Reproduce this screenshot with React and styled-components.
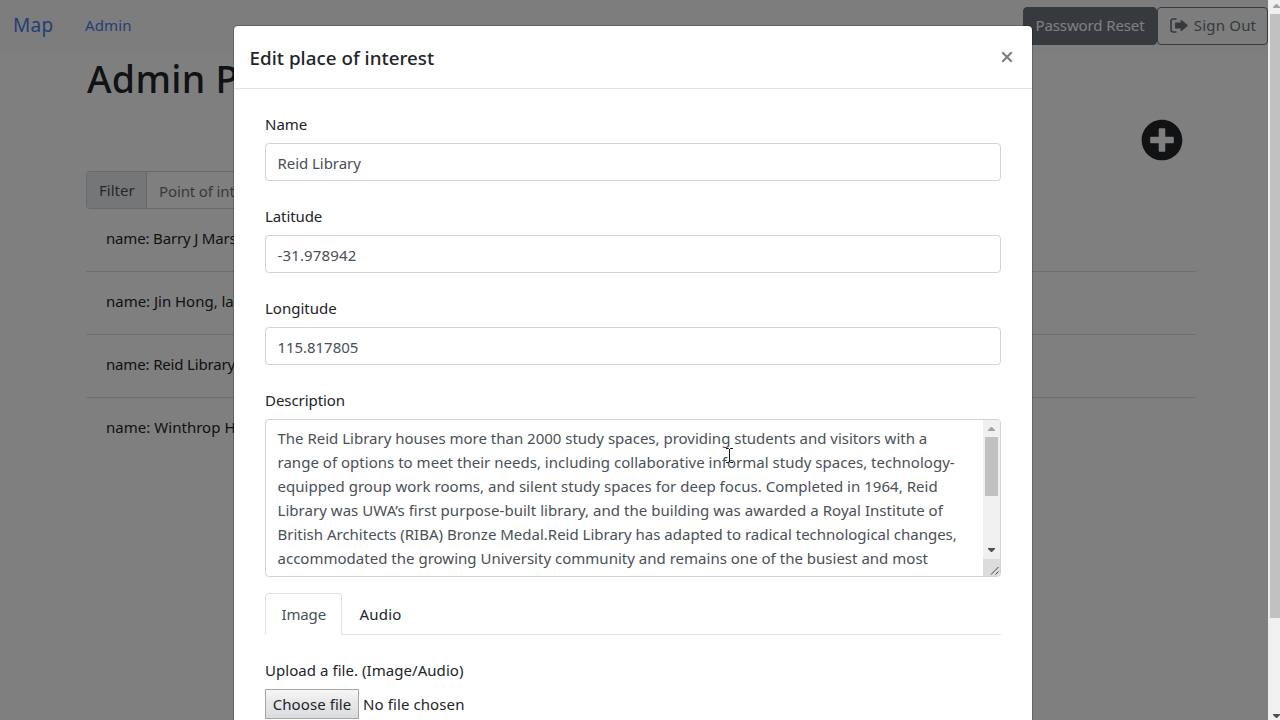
import React from "react";
import styled, { createGlobalStyle } from "styled-components";
import { FaPlusCircle } from "react-icons/fa";

const GlobalStyle = createGlobalStyle`
  *, *::before, *::after { box-sizing: border-box; }
  html, body { margin: 0; padding: 0; height: 720px; overflow: hidden; }
  body {
    font-family: "Noto Sans", "Open Sans", sans-serif;
    font-size: 15px;
    line-height: 24px;
    color: #212529;
    background: #fff;
  }
  button, input { font: inherit; }
`;

const Shell = styled.div`
  position: relative;
  display: flex;
  width: 1280px;
  height: 720px;
  overflow: hidden;
`;

const Page = styled.div`
  flex: 0 0 1268px;
  overflow: hidden;
`;

const Tracked = styled.span`
  white-space: pre;
  letter-spacing: ${(p) => p.$ls || 0}px;
`;

/* Navigation bar */
const Navbar = styled.nav`
  display: flex;
  align-items: center;
  height: 53px;
  padding: 0 0 2px 13px;
  background: #f8fbf9;
`;

const Brand = styled.a`
  width: 72px;
  padding-bottom: 1px;
  font-size: 19px;
  letter-spacing: 0.3px;
  color: #4a7cf0;
`;

const NavLink = styled.a`
  flex: 1;
  padding-bottom: 2px;
  letter-spacing: 0.14px;
  color: #4a7cf0;
`;

const NavButton = styled.button`
  display: flex;
  align-items: center;
  justify-content: center;
  width: ${(p) => p.$width}px;
  height: 38px;
  padding: 0 0 2px;
  border: 1px solid #6c757d;
  border-radius: 4px;
  background: ${(p) => (p.$solid ? "#6c757d" : "transparent")};
  color: ${(p) => (p.$solid ? "#fff" : "#6c757d")};
  white-space: pre;
  letter-spacing: ${(p) => p.$ls || 0}px;
`;

const SignOutIcon = styled.svg`
  width: 18px;
  height: 15px;
  margin: 2px 6px 0 1px;
`;

/* Admin content */
const Content = styled.main`
  width: 1110px;
  margin-left: 86px;
`;

const Heading = styled.h1`
  margin: 0;
  padding: 2px 0 1px 1px;
  white-space: nowrap;
  font-size: 37.5px;
  line-height: 48px;
  font-weight: 500;
  letter-spacing: 0.3px;
`;

const AddRow = styled.div`
  display: flex;
  justify-content: flex-end;
  height: 67px;
  padding: 15px 13px 0 0;
  svg { width: 42px; height: 42px; }
`;

const FilterGroup = styled.div`
  display: flex;
  width: 600px;
  height: 38px;
  border: 1px solid #ced4da;
  border-radius: 4px;
  overflow: hidden;
`;

const FilterLabel = styled.div`
  width: 60px;
  padding: 6px 12px;
  border-right: 1px solid #ced4da;
  background: #e9ecef;
  color: #495057;
`;

const FilterInput = styled.div`
  padding: 7px 0 7px 12px;
  white-space: nowrap;
  letter-spacing: -0.13px;
  color: #6c757d;
`;

const List = styled.ul`
  margin: 0;
  padding: 0;
  list-style: none;
`;

const ListItem = styled.li`
  height: 63px;
  padding: 17px 20px 0;
  border-bottom: 1px solid ${(p) => (p.$last ? "transparent" : "#dfdfdf")};
  white-space: nowrap;
  letter-spacing: ${(p) => p.$ls || 0}px;
`;

/* Scroll bars */
const PageScroll = styled.div`
  display: flex;
  flex-direction: column;
  flex: 0 0 12px;
  padding-left: 2px;
  background: #f0f0f0;
`;

const Arrow = styled.svg`
  display: block;
  flex: none;
  width: 7px;
  height: 4px;
  margin: ${(p) => p.$margin};
  fill: ${(p) => p.$color};
`;

const Thumb = styled.div`
  height: ${(p) => p.$height}px;
  background: #c1c1c1;
`;

const Spacer = styled.div`
  flex: 1;
`;

/* Modal */
const Backdrop = styled.div`
  position: absolute;
  inset: 0 12px 0 0;
  background: rgba(0, 0, 0, 0.5);
`;

const Modal = styled.section`
  position: absolute;
  top: 25px;
  left: 233px;
  width: 800px;
  height: 760px;
  border: 1px solid rgba(0, 0, 0, 0.2);
  border-radius: 5px;
  background: #fff;
  background-clip: padding-box;
`;

const ModalHeader = styled.header`
  display: flex;
  align-items: center;
  justify-content: space-between;
  height: 63px;
  padding: 0 19px 0 15.5px;
  border-bottom: 1px solid #dee2e6;
`;

const ModalTitle = styled.h5`
  margin: 0;
  padding-top: 2px;
  font-size: 18.75px;
  font-weight: 550;
  letter-spacing: 0.04px;
`;

const CloseIcon = styled.svg`
  width: 12px;
  height: 12px;
  stroke: #7f7f7f;
  stroke-width: 2.2;
`;

const ModalBody = styled.div`
  padding: 22px 31px 0;
`;

const Field = styled.div`
  margin-bottom: ${(p) => p.$gap ?? 22}px;
`;

const Label = styled.label`
  display: block;
  height: 24px;
  padding-top: ${(p) => p.$drop ?? 1}px;
  margin-bottom: ${(p) => p.$gap ?? 8}px;
  letter-spacing: ${(p) => p.$ls || 0}px;
`;

const Input = styled.div`
  height: 38px;
  padding: 7px 11.5px;
  border: 1px solid #ced4da;
  border-radius: 4px;
  color: #495057;
  letter-spacing: ${(p) => p.$ls || 0}px;
`;

const TextArea = styled.div`
  display: flex;
  height: 158px;
  border: 1px solid #ced4da;
  border-radius: 4px;
  overflow: hidden;
  color: #495057;
`;

const TextLines = styled.div`
  display: flex;
  flex-direction: column;
  flex: 1;
  padding: 6px 0 0 11.5px;
`;

const AreaScroll = styled.div`
  display: flex;
  flex-direction: column;
  flex: 0 0 17px;
  background: #f0f0f0;
`;

const AreaThumb = styled(Thumb)`
  margin: 0 2px;
`;

const Grip = styled.svg`
  display: block;
  width: 17px;
  height: 17px;
  background: #dcdcdc;
  stroke: #454545;
`;

const Tabs = styled.div`
  display: flex;
  height: 42px;
  margin-bottom: 23px;
  border-bottom: 1px solid #dee2e6;
`;

const Tab = styled.div`
  width: 77px;
  height: 42px;
  padding: 8px 0 0 ${(p) => (p.$active ? 15.5 : 16.5)}px;
  border: 1px solid transparent;
  border-color: ${(p) => (p.$active ? "#dee2e6 #dee2e6 #fff" : "transparent")};
  border-radius: 4px 4px 0 0;
  color: ${(p) => (p.$active ? "#495057" : "#212529")};
  letter-spacing: ${(p) => p.$ls}px;
  white-space: nowrap;
`;

const FileRow = styled.div`
  display: flex;
  align-items: center;
  gap: 4px;
  letter-spacing: 0.1px;
`;

const FileButton = styled.button`
  width: 94px;
  height: 30px;
  padding: 0;
  border: 1px solid #a6a6a6;
  background: linear-gradient(#f6f7f4, #e9e9ea 40%, #d9dbde);
  color: #212529;
  letter-spacing: 0.08px;
  white-space: nowrap;
`;

const TextCursor = styled.svg`
  position: absolute;
  left: 725px;
  top: 448px;
  width: 8px;
  height: 15px;
  stroke: #111;
  fill: none;
`;

const places = [
  { text: "name: Barry J Mars", ls: -0.17 },
  { text: "name: Jin Hong, la", ls: -0.02 },
  { text: "name: Reid Library", ls: -0.16 },
  { text: "name: Winthrop H", ls: 0.03 },
];

const fields = [
  { label: "Name", labelLs: 0, value: "Reid Library", ls: -0.05 },
  { label: "Latitude", labelLs: -0.1, value: "-31.978942", ls: 0.14 },
  { label: "Longitude", labelLs: 0, value: "115.817805", ls: -0.05 },
];

const description = [
  ["The Reid Library houses more than 2000 study spaces, providing students and visitors with a", -0.005],
  ["range of options to meet their needs, including collaborative informal study spaces, technology-", 0.02],
  ["equipped group work rooms, and silent study spaces for deep focus. Completed in 1964, Reid", 0.032],
  ["Library was UWA’s first purpose-built library, and the building was awarded a Royal Institute of", 0.04],
  ["British Architects (RIBA) Bronze Medal.Reid Library has adapted to radical technological changes,", -0.004],
  ["accommodated the growing University community and remains one of the busiest and most", 0.012],
];

function ScrollArrow({ down, color, margin }) {
  return (
    <Arrow viewBox="0 0 7 4" $color={color} $margin={margin}>
      <path d={down ? "M0 0H7V1L4 4H3L0 1Z" : "M0 4H7V3L4 0H3L0 3Z"} />
    </Arrow>
  );
}

function EditPlaceModal() {
  return (
    <Modal role="dialog">
      <ModalHeader>
        <ModalTitle>Edit place of interest</ModalTitle>
        <CloseIcon viewBox="0 0 12 12">
          <path d="M1.3 1.3L10.7 10.7M10.7 1.3L1.3 10.7" />
        </CloseIcon>
      </ModalHeader>
      <ModalBody>
        {fields.map((f) => (
          <Field key={f.label}>
            <Label $ls={f.labelLs}>{f.label}</Label>
            <Input $ls={f.ls}>{f.value}</Input>
          </Field>
        ))}
        <Field $gap={16}>
          <Label $ls={-0.06}>Description</Label>
          <TextArea>
            <TextLines>
              {description.map(([line, ls]) => (
                <Tracked key={line} $ls={ls}>{line}</Tracked>
              ))}
            </TextLines>
            <AreaScroll>
              <ScrollArrow color="#a3a3a3" margin="7px 5px 6px" />
              <AreaThumb $height={59} />
              <Spacer />
              <ScrollArrow down color="#505050" margin="0 5px 7px" />
              <Grip viewBox="0 0 17 17">
                <path d="M8 15.5L15.5 8M12.5 15.5L15.5 12.5" />
              </Grip>
            </AreaScroll>
          </TextArea>
        </Field>
        <Tabs>
          <Tab $active $ls={-0.15}>Image</Tab>
          <Tab $ls={0.2}>Audio</Tab>
        </Tabs>
        <Label $drop={0} $ls={0.05} $gap={7}>Upload a file. (Image/Audio)</Label>
        <FileRow>
          <FileButton>Choose file</FileButton>
          <span>No file chosen</span>
        </FileRow>
      </ModalBody>
    </Modal>
  );
}

export default function App() {
  return (
    <Shell>
      <GlobalStyle />
      <Page>
        <Navbar>
          <Brand>Map</Brand>
          <NavLink>Admin</NavLink>
          <NavButton $solid $width={134} $ls={-0.12}>Password Reset</NavButton>
          <NavButton $width={111} $ls={0.2}>
            <SignOutIcon viewBox="0 0 18 15">
              <path
                d="M6.5 1H3.2Q1 1 1 3.2V11.8Q1 14 3.2 14H6.5"
                fill="none"
                stroke="currentColor"
                strokeWidth="1.6"
              />
              <path
                d="M5 5.3Q5 4.6 5.7 4.6H10.7V2.2Q10.8 1.4 11.6 1.9L17.6 7Q18 7.5 17.6 8L11.6 13.1Q10.8 13.6 10.7 12.8V10.4H5.7Q5 10.4 5 9.7Z"
                fill="currentColor"
              />
            </SignOutIcon>
            Sign Out
          </NavButton>
        </Navbar>
        <Content>
          <Heading>Admin P</Heading>
          <AddRow>
            <FaPlusCircle />
          </AddRow>
          <FilterGroup>
            <FilterLabel>Filter</FilterLabel>
            <FilterInput>Point of int</FilterInput>
          </FilterGroup>
          <List>
            {places.map((p, i) => (
              <ListItem key={p.text} $ls={p.ls} $last={i === places.length - 1}>
                {p.text}
              </ListItem>
            ))}
          </List>
        </Content>
      </Page>
      <PageScroll>
        <ScrollArrow color="#a3a3a3" margin="4px 3px 6px" />
        <Thumb $height={604} />
        <Spacer />
        <ScrollArrow down color="#505050" margin="0 3px 2px" />
      </PageScroll>
      <Backdrop />
      <EditPlaceModal />
      <TextCursor viewBox="0 0 8 15">
        <path d="M1 0.5H3.5L4.5 1.5L5.5 0.5H8M4.5 1V14M1 14.5H3.5L4.5 13.5L5.5 14.5H8" />
      </TextCursor>
    </Shell>
  );
}
